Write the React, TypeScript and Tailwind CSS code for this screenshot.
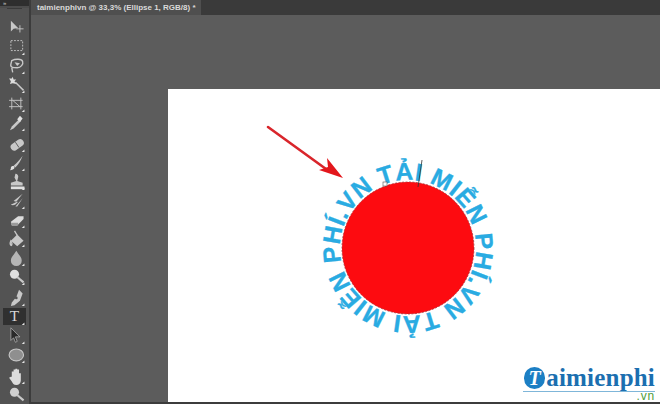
import type { ReactNode } from "react";

function Corner() {
  return <path d="M20 20l3 0l0 -3z" fill="#e6e6e6" />;
}

function Tool({ children, active, corner = true, sep }: { children: ReactNode; active?: boolean; corner?: boolean; sep?: boolean }) {
  return (
    <div className={sep ? "pt-[2px]" : ""}>
      <div className={`w-[23px] h-[19px] border-y border-transparent bg-clip-padding ${active ? "bg-[#303030]" : ""}`}>
        <svg width="23" height="19" viewBox="0 0 24 21" fill="none" className="block -mt-px">
          {children}
          {corner && <Corner />}
        </svg>
      </div>
    </div>
  );
}

const g = "#c8c8c8";

function Toolbar() {
  return (
    <div className="w-[31px] shrink-0 bg-[#535353] border-r-2 border-[#3c3c3c] flex flex-col">
      <div className="h-[7px] bg-[#2e2e2e] flex items-center pl-[3px] text-[6px] leading-none text-[#cfcfcf] font-['Liberation_Sans',sans-serif]">
        »
      </div>
      <div className="h-[6px] bg-[#4c4c4c]" />
      <div className="mx-[7px] h-[2px] bg-[#3a3a3a]" />
      <div className="flex flex-col pl-[3px] pt-[9px]">
        <Tool corner={false}>
          <path d="M8 3v12l3-3 5-1z" fill={g} />
          <path d="M18 8v8M14 12h8" stroke={g} strokeWidth="1" />
        </Tool>
        <Tool>
          <rect x="8" y="4" width="13" height="11" stroke={g} strokeDasharray="2 1.5" />
        </Tool>
        <Tool>
          <path d="M9 5c4-2 11-2 12 1s-2 7-6 7-8 0-7-4zM9 13l1 5" stroke={g} strokeWidth="1.5" />
          <path d="M12 7l6 1-3 3z" fill={g} />
        </Tool>
        <Tool>
          <path d="M13 8l9 9" stroke={g} strokeWidth="1.6" />
          <path d="M10 2l1 3 3 0-2 2 2 3-4-1-3 1 1-3-2-3 3 0z" fill="#dcdcdc" />
        </Tool>
        <Tool>
          <path d="M9 4v13M19 4v13M6 7h15M6 14h15" stroke={g} strokeWidth="1" />
          <path d="M10 7l8 7" stroke={g} strokeWidth="1" />
        </Tool>
        <Tool>
          <path d="M7 19l2-4 8-8 2 2-8 8z" fill={g} />
          <path d="M15 7l3-4 3 3-3 4z" fill="#e0e0e0" />
        </Tool>
        <Tool sep>
          <rect x="7" y="8" width="16" height="8" rx="4" transform="rotate(-35 15 12)" fill={g} />
          <path d="M13 9l4 6" stroke="#535353" strokeWidth="1" />
        </Tool>
        <Tool>
          <path d="M21 3c-3 4-6 8-10 11l2 2c4-4 6-8 8-13z" fill={g} />
          <path d="M7 19c2 0 5-1 5-3s-3-2-4 0c0 1 0 2-1 3z" fill="#e0e0e0" />
        </Tool>
        <Tool>
          <path d="M13 2a3 3 0 0 1 3 4l-1 4 6 2v3H8v-3l6-2-2-4z" fill={g} />
          <rect x="8" y="16" width="15" height="3" fill="#e0e0e0" />
        </Tool>
        <Tool>
          <path d="M21 3l-10 8 3 1z" fill={g} />
          <path d="M8 15c3-1 6-3 8-3l-3 3c-2 1-4 1-5 0zM21 8l-8 9 2 0z" fill={g} />
        </Tool>
        <Tool>
          <path d="M8 13l8-6h6v3l-7 7H9z" fill="#dcdcdc" />
          <path d="M8 14h8v3H9z" fill="#9a9a9a" />
        </Tool>
        <Tool>
          <path d="M15 6l7 7-7 6-7-6z" fill={g} />
          <path d="M8 13c-1 2-1 4 0 5s2-2 0-5zM12 2l3 5" stroke={g} strokeWidth="1.4" />
        </Tool>
        <Tool>
          <path d="M14 3c3 5 6 7 6 11a6 6 0 0 1-12 0c0-4 3-6 6-11z" fill="#b5b5b5" />
        </Tool>
        <Tool>
          <circle cx="12" cy="8" r="5" fill="#e0e0e0" />
          <path d="M15 11l7 6" stroke={g} strokeWidth="2.4" />
        </Tool>
        <Tool sep>
          <path d="M17 2l4 4-3 8-6 5-4 1 1-4 5-6z" fill={g} />
          <circle cx="14" cy="11" r="1.5" fill="#535353" />
        </Tool>
        <Tool active>
          <text x="12" y="16" textAnchor="middle" fontFamily="'Liberation Serif', serif" fontSize="17" fill="#d8d8d8">T</text>
        </Tool>
        <Tool>
          <path d="M8 2v14l3-3 2 5 2-1-2-5h5z" fill="#2a2a2a" stroke="#b8b8b8" strokeWidth="0.8" />
        </Tool>
        <Tool>
          <ellipse cx="14" cy="11" rx="8" ry="6.5" fill="#8f8f8f" stroke={g} strokeWidth="1.2" />
        </Tool>
        <Tool sep>
          <path d="M9 12V6h2v5-7h2v7-8h2v8-7h2v8-4h2v8c0 3-2 5-5 5s-4-2-5-4l-3-4 2-1z" fill="#dcdcdc" />
        </Tool>
        <Tool corner={false}>
          <circle cx="12" cy="8" r="5" fill="#d0d0d0" />
          <path d="M15 11l7 6" stroke={g} strokeWidth="2.4" />
        </Tool>
      </div>
    </div>
  );
}

function Artwork() {
  const cx = 240;
  const cy = 159;
  const r = 68;
  const start = -Math.PI * 0.5 - 0.41;
  const x1 = cx + r * Math.cos(start);
  const y1 = cy + r * Math.sin(start);
  const x2 = cx + r * Math.cos(start + Math.PI);
  const y2 = cy + r * Math.sin(start + Math.PI);
  const d = `M${x1} ${y1}A${r} ${r} 0 1 1 ${x2} ${y2}A${r} ${r} 0 1 1 ${x1} ${y1}`;
  return (
    <svg width="492" height="313" viewBox="0 0 492 313" className="block">
      <defs>
        <path id="ring" d={d} />
      </defs>
      <text fontFamily="'Liberation Sans', sans-serif" fontWeight="700" fontSize="24.5" fill="#29abe2" stroke="#29abe2" strokeWidth="0.35">
        <textPath href="#ring" textLength="426" lengthAdjust="spacing">
          {"TẢI MIỄN PHÍ.VN TẢI MIỄN PHÍ.VN\u00a0"}
        </textPath>
      </text>
      <circle cx={cx} cy={cy} r="66" fill="#fd0b10" stroke="#a5333a" strokeWidth="0.8" strokeDasharray="2 1.5" />
      <path d="M254 71l-4 27" stroke="#333" strokeWidth="0.8" />
      <rect x="215" y="93" width="4" height="4" fill="#fff" stroke="#555" strokeWidth="0.6" />
      <path d="M100 38l58 42" stroke="#d9252b" strokeWidth="2.6" strokeLinecap="round" />
      <path d="M175 89l-16-20 1 9-9 3z" fill="#e3171c" />
    </svg>
  );
}

function Logo() {
  return (
    <div className="absolute right-[5px] bottom-[2px] flex flex-col items-end font-['Liberation_Serif',serif]">
      <div className="flex items-center h-[26px]">
        <div className="w-[21px] h-[22px] rounded-full bg-[#1c7fc4] flex items-center justify-center text-white font-bold italic text-[20px] leading-none mr-[1px]">
          T
        </div>
        <span className="text-[25px] font-bold tracking-[0.2px] text-[#1b6fb0] leading-[18px]">aimienphi</span>
      </div>
      <div className="w-[132px] h-[1px] bg-[#7fb6d9]" />
      <span className="text-[12px] leading-[8px] font-['Liberation_Sans',sans-serif] text-[#4f9e3a] tracking-[0.8px]">.vn</span>
    </div>
  );
}

export default function App() {
  return (
    <div className="w-[660px] h-[404px] flex overflow-hidden bg-[#5a5a5a]">
      <Toolbar />
      <div className="flex-1 flex flex-col min-w-0 border-b-2 border-[#3c3c3c]">
        <div className="h-[15px] bg-[#3a3a3a] flex shrink-0">
          <div className="w-[170px] pl-[6px] bg-[#4f4f4f] text-[#dadada] text-[8px] font-bold leading-[15px] font-['Liberation_Sans',sans-serif] whitespace-nowrap">
            taimienphivn @ 33,3% (Ellipse 1, RGB/8) *
          </div>
        </div>
        <div className="flex-1 bg-[#5c5c5c] pl-[137px] pt-[74px] min-h-0">
          <div className="bg-white h-full relative">
            <Artwork />
            <Logo />
          </div>
        </div>
      </div>
    </div>
  );
}
